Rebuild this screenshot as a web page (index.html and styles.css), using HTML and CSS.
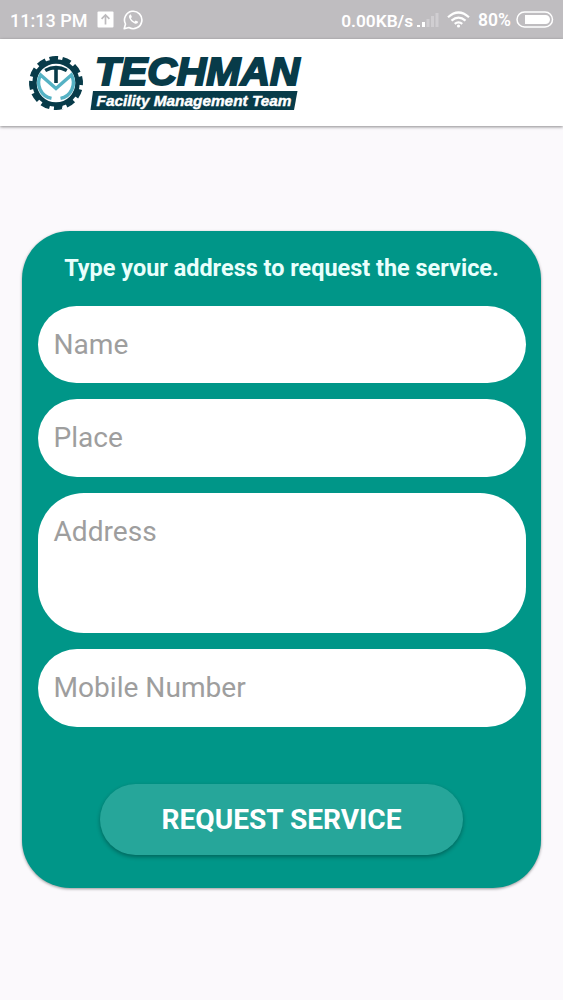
FILE: index.html
```html
<!DOCTYPE html>
<html lang="en">
<head>
<meta charset="utf-8">
<title>Techman</title>
<link rel="stylesheet" href="styles.css">
</head>
<body>
<div class="status">
  <span class="time">11:13 PM</span>
  <svg class="upload" width="17" height="17" viewBox="0 0 17 17"><rect x=".5" y=".5" width="16" height="16" rx="1" fill="#fff"/><path d="M8.5 13.5V4M4.6 7.8 8.5 3.9l3.9 3.9" fill="none" stroke="#bdbbbe" stroke-width="1.7"/></svg>
  <svg class="whatsapp" width="21" height="21" viewBox="0 0 21 21"><path d="M1.2 19.8 2.5 15A8.7 8.7 0 1 1 5.900 18.500Z" fill="none" stroke="#fff" stroke-width="1.6" stroke-linejoin="round"/><path d="M7.200 5.500c-1.300.8-1.500 2.200-.8 3.800 1.100 2.500 3 4.300 5.300 5.200 1.700.6 3.100 0 3.500-1.700l-2.500-1.400-1.200 1.300c-1.700-.8-2.900-2-3.600-3.500l1-1.200-1-2.400Z" fill="#fff"/></svg>
  <span class="rate">0.00KB/s</span>
  <svg class="signal" width="22" height="15" viewBox="0 0 22 15"><path d="M0 12h3v2H0ZM5 9h3v5H5Z" fill="#fff"/><path d="M9.500 6h3v8h-3ZM14 3h3v11h-3ZM18.500 0h3v14h-3Z" fill="#d0ced1"/></svg>
  <svg class="wifi" width="23" height="17" viewBox="0 0 23 17"><path d="M1 6.300Q11.500-3.300 22 6.300M4.500 9.700q7-6 14 0M7.700 12.800q3.800-3 7.600 0" fill="none" stroke="#fff" stroke-width="2.200"/><circle cx="11.500" cy="15" r="1.600" fill="#fff"/></svg>
  <span class="percent">80%</span>
  <svg class="battery" width="38" height="17" viewBox="0 0 38 17"><rect x="1" y="1" width="35.500" height="15" rx="7.500" fill="none" stroke="#fff" stroke-width="1.500"/><path d="M9 4h20.500a4.500 4.500 0 0 1 0 9H9Z" fill="#fff"/></svg>
</div>
<header class="header">
  <svg class="logo" width="280" height="64" viewBox="0 0 280 64">
    <g transform="translate(31 32)">
      <circle r="21.500" fill="none" stroke="#083b49" stroke-width="4.400"/>
      <circle r="24.600" fill="none" stroke="#083b49" stroke-width="4.800" pathLength="120" stroke-dasharray="6.600 3.400" transform="rotate(-15)"/>
      <path d="M-4.500 15.400A16 16 0 0 1-15.400-8L0 5.500 15.400-8A16 16 0 0 1 4.500 15.400" fill="none" stroke="#55b2c4" stroke-width="3.400"/>
      <path d="M-10.800-12.500Q0-18.500 10.800-12.500M0-15V0" fill="none" stroke="#083b49" stroke-width="3.600"/>
    </g>
    <text class="brand" x="70" y="34.300" textLength="204.500" lengthAdjust="spacingAndGlyphs">TECHMAN</text>
    <path d="M68 40H272.500L269 59H65.500Z" fill="#083b49"/>
    <text class="tagline" x="71.500" y="54.500" textLength="195" lengthAdjust="spacingAndGlyphs">Facility Management Team</text>
  </svg>
</header>
<main class="content">
  <section class="card">
    <h1 class="title">Type your address to request the service.</h1>
    <div class="fields">
      <div class="field"><span class="hint">Name</span></div>
      <div class="field"><span class="hint">Place</span></div>
      <div class="field tall"><span class="hint">Address</span></div>
      <div class="field"><span class="hint">Mobile Number</span></div>
    </div>
    <button class="submit" type="button">REQUEST SERVICE</button>
  </section>
</main>
</body>
</html>
```
FILE: styles.css
```css
* { box-sizing: border-box; }
body {
  margin: 0;
  height: 1000px;
  overflow: hidden;
  display: flex;
  flex-direction: column;
  background: #fbf9fc;
  font-family: Roboto, sans-serif;
}
svg { display: block; flex: none; }
.status {
  height: 39px;
  flex: none;
  display: flex;
  align-items: center;
  padding: 0 9px 0 10px;
  background: #bfbdc0;
  color: #fff;
  font-size: 18px;
  font-weight: 500;
  line-height: 22px;
  white-space: nowrap;
}
.time { width: 87px; padding-top: 2px; }
.whatsapp { margin-left: 9px; }
.rate { margin-left: auto; padding-top: 2px; font-size: 17.300px; font-weight: 600; }
.signal { margin-left: 4px; margin-top: 1px; }
.wifi { margin-left: 8px; }
.percent { margin-left: 8px; padding-top: 1px; font-size: 17.500px; font-weight: 600; }
.battery { margin-left: 5px; }
.header {
  height: 87px;
  flex: none;
  padding: 12px 25px;
  background: #fff;
  box-shadow: 0 1px 3px rgba(0, 0, 0, .45);
}
.logo { overflow: visible; }
.brand {
  font: italic 700 39px "Liberation Sans", sans-serif;
  fill: #083b49;
  stroke: #083b49;
  stroke-width: 2px;
}
.tagline {
  font: italic 700 15px "Liberation Sans", sans-serif;
  fill: #fff;
  stroke: #fff;
  stroke-width: .4px;
}
.content { padding: 104.500px 22px 0; }
.card {
  height: 657.500px;
  display: flex;
  flex-direction: column;
  align-items: center;
  padding: 22.500px 15.500px 0;
  border-radius: 48px;
  background: #009688;
  box-shadow: 0 1px 3px rgba(0, 0, 0, .4);
}
.title {
  margin: 0;
  color: #e9fffc;
  font-size: 23.450px;
  font-weight: 700;
  line-height: 30px;
  white-space: nowrap;
}
.fields {
  width: 100%;
  display: flex;
  flex-direction: column;
  gap: 16.300px;
  margin-top: 22.500px;
}
.field {
  height: 77.500px;
  padding: 22px 16px;
  border-radius: 42px;
  background: #fff;
}
.tall { height: 140px; border-radius: 46px; }
.hint {
  display: block;
  color: #9e9e9e;
  font-size: 28.100px;
  line-height: 34px;
}
.submit {
  width: 363px;
  height: 71px;
  margin-top: 57.500px;
  padding: 0;
  border: 0;
  border-radius: 36px;
  background: #26a69a;
  box-shadow: 0 2px 4px rgba(0, 0, 0, .32);
  color: #fff;
  font: 700 28.100px Roboto, sans-serif;
}
```
